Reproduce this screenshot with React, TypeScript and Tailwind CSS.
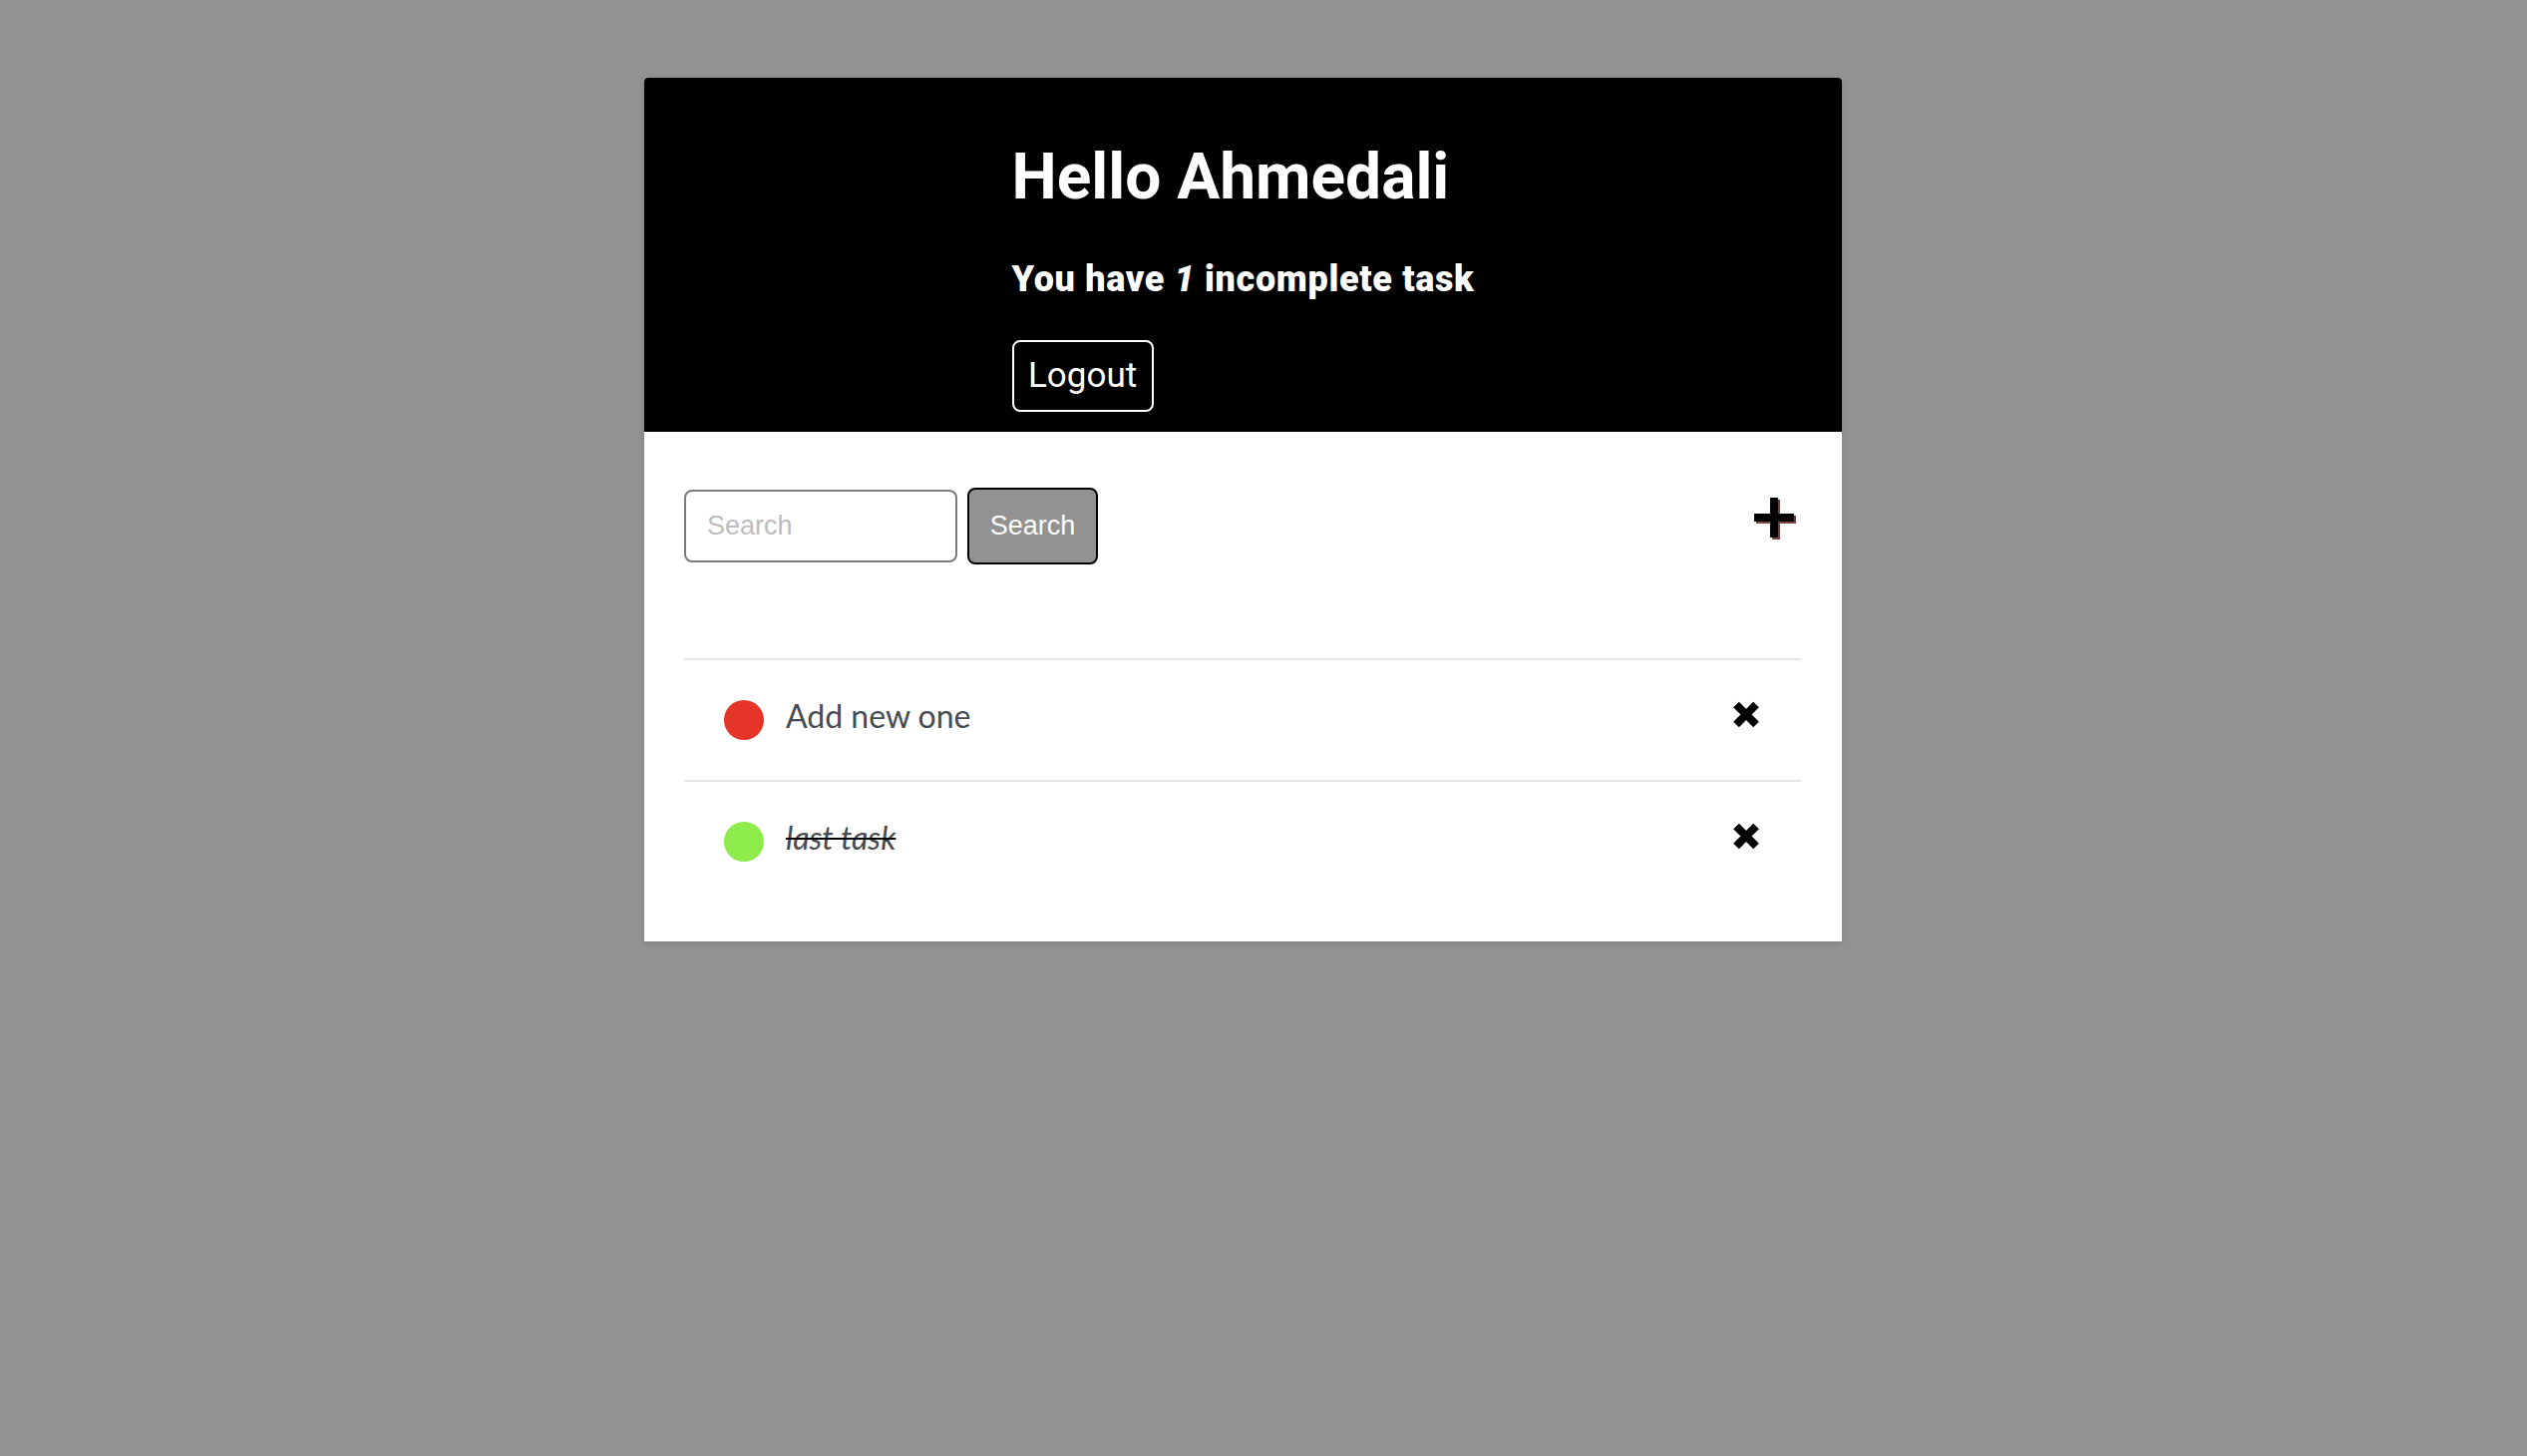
import React from 'react';

interface Task {
  id: number;
  title: string;
  done: boolean;
}

const tasks: Task[] = [
  { id: 1, title: 'Add new one', done: false },
  { id: 2, title: 'last task', done: true },
];

// heavy plus with a brownish offset shadow
function PlusIcon() {
  return (
    <svg width="43" height="43" viewBox="0 0 43 43" className="self-start mt-[10px] mr-[5px]">
      <rect x="2" y="18" width="40" height="8" fill="#7b4541" />
      <rect x="18" y="2" width="8" height="40" fill="#7b4541" />
      <rect x="0" y="16" width="40" height="8" fill="#000" />
      <rect x="16" y="0" width="8" height="40" fill="#000" />
    </svg>
  );
}

function CrossIcon() {
  return (
    <svg width="28" height="27" viewBox="0 0 28 27" className="mb-[12px]">
      <path d="M4 3.5 L24 23.5 M24 3.5 L4 23.5" stroke="#000" strokeWidth="8" strokeLinecap="butt" />
    </svg>
  );
}

export default function App() {
  const incomplete = tasks.filter((t) => !t.done).length;

  return (
    <div className="min-h-screen bg-[#929292] pt-[78px]">
      <div className="ml-[646px] w-[1201px] bg-white rounded-t shadow-[0_2px_6px_rgba(0,0,0,0.12)]">
        {/* Header */}
        <header className="bg-black rounded-t flex justify-center pt-[68px] pb-[20px] text-white font-['Roboto',sans-serif]">
          <div>
            <h1 className="text-[64px] font-bold leading-none">Hello Ahmedali</h1>
            <h3 className="text-[36px] font-black leading-none mt-[52px] tracking-[0.65px]">
              You have <em>{incomplete}</em> incomplete task
            </h3>
            <button className="mt-[43px] w-[142px] h-[72px] border-2 border-white rounded-lg text-[35px] font-normal text-white">
              Logout
            </button>
          </div>
        </header>

        {/* Body */}
        <div className="px-10 pb-10">
          <div className="flex items-start justify-between pt-[56px]">
            <div className="flex items-center gap-[10px] font-['Liberation_Sans',Arial,sans-serif]">
              <input
                type="text"
                placeholder="Search"
                className="w-[274px] h-[73px] border-2 border-[#7a7a7a] rounded-[8px] px-[21px] text-[27px] text-black placeholder:text-[#bdbdbd] outline-none"
              />
              <button className="w-[131px] h-[77px] bg-[#929292] border-2 border-black rounded-[8px] text-[27px] text-white">
                Search
              </button>
            </div>
            <PlusIcon />
          </div>

          <ul className="mt-[94px] font-['Lato',sans-serif]">
            {tasks.map((task) => (
              <li
                key={task.id}
                className="border-t-2 border-[#e2e5ea] flex items-center justify-between pl-10 pr-[42px] py-10"
              >
                <div className="flex items-center gap-[22px]">
                  <span
                    className={
                      task.done
                        ? 'w-10 h-10 rounded-full bg-[#8deb4b]'
                        : 'w-10 h-10 rounded-full bg-[#e53528]'
                    }
                  ></span>
                  <span
                    className={
                      task.done
                        ? 'text-[32px] leading-[32px] mb-[8px] text-[#464b52] italic line-through decoration-black decoration-2'
                        : 'text-[32px] leading-[32px] mb-[8px] text-[#464b52]'
                    }
                  >
                    {task.title}
                  </span>
                </div>
                <CrossIcon />
              </li>
            ))}
          </ul>
        </div>
      </div>
    </div>
  );
}
